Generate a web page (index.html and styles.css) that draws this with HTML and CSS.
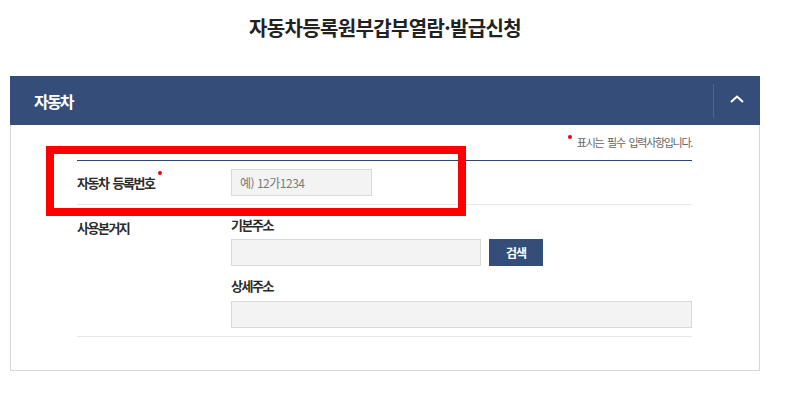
FILE: index.html
```html
<!DOCTYPE html>
<html lang="ko">
<head>
<meta charset="utf-8">
<link rel="stylesheet" href="styles.css">
</head>
<body>
<div class="page">
  <h1 class="title">자동차등록원부갑부열람·발급신청</h1>
  <section class="card">
    <div class="card-head">
      <span class="card-title">자동차</span>
      <span class="head-sep"></span>
      <button class="toggle" aria-label="접기">
        <svg width="14" height="8" viewBox="0 0 14 8"><path d="M1 7 L7 1.5 L13 7" fill="none" stroke="#fff" stroke-width="2"/></svg>
      </button>
    </div>
    <div class="card-body">
      <p class="note"><span class="dot"></span>표시는 필수 입력사항입니다.</p>
      <div class="table">
        <div class="row row-car">
          <div class="label">자동차 등록번호<span class="req"></span></div>
          <div class="field">
            <input class="input input-sm" type="text" placeholder="예) 12가1234">
          </div>
        </div>
        <div class="row row-addr">
          <div class="label label-addr">사용본거지</div>
          <div class="field">
            <div class="sublabel">기본주소</div>
            <div class="inline">
              <input class="input input-md" type="text">
              <button class="btn">검색</button>
            </div>
            <div class="sublabel sublabel-2">상세주소</div>
            <input class="input input-full" type="text">
          </div>
        </div>
      </div>
    </div>
  </section>
  <div class="highlight"></div>
</div>
</body>
</html>
```

FILE: styles.css
```css
* { box-sizing: border-box; }
html, body { margin: 0; padding: 0; background: #fff; }
body {
  font-family: "Noto Sans CJK KR", "Noto Sans", sans-serif;
  color: #333;
}
.page {
  position: relative;
  width: 750px;
  margin-left: 10px;
}
.title {
  margin: 0;
  height: 76px;
  padding-top: 14px;
  text-align: center;
  font-size: 20px;
  line-height: 28px;
  font-weight: 700;
  letter-spacing: -0.65px;
  color: #222;
}
.card-head {
  height: 49px;
  background: #354e79;
  display: flex;
  align-items: center;
  padding-left: 24px;
}
.card-title {
  color: #fff;
  font-size: 16px;
  font-weight: 700;
  letter-spacing: -1.8px;
  flex: 1;
}
.head-sep {
  width: 1px;
  height: 34px;
  background: #4d6590;
}
.toggle {
  width: 46px;
  height: 49px;
  background: transparent;
  border: 0;
  padding: 0 0 4px 0;
  display: flex;
  align-items: center;
  justify-content: center;
}
.card-body {
  border: 1px solid #d6d6d6;
  border-top: 0;
  height: 246px;
  padding: 0 67px 0 66px;
}
.note {
  margin: 0;
  padding-top: 9px;
  height: 35px;
  text-align: right;
  font-size: 11px;
  line-height: 16px;
  letter-spacing: -1.3px;
  word-spacing: 2px;
  color: #666;
}
.note .dot {
  display: inline-block;
  width: 4px;
  height: 4px;
  border-radius: 50%;
  background: #e60012;
  vertical-align: top;
  margin-top: 1px;
  margin-right: 5px;
}
.table {
  border-top: 1px solid #2f4570;
}
.row {
  display: flex;
  border-bottom: 1px solid #e8e8e8;
}
.row-car {
  align-items: center;
  padding: 8px 0 8px;
}
.row-addr {
  padding: 10px 0 8px;
}
.label {
  width: 154px;
  font-size: 13px;
  line-height: 20px;
  font-weight: 700;
  letter-spacing: -1.5px;
  word-spacing: 2px;
  color: #2b2b2b;
}
.label-addr { padding-top: 3px; }
.req {
  display: inline-block;
  width: 4px;
  height: 4px;
  border-radius: 50%;
  background: #e60012;
  vertical-align: top;
  margin-left: 4px;
  margin-top: -2px;
}
.field { flex: 1; }
.sublabel {
  font-size: 13px;
  line-height: 20px;
  font-weight: 700;
  letter-spacing: -1.5px;
  color: #2b2b2b;
  margin-bottom: 4px;
}
.sublabel-2 { margin-top: 10px; margin-bottom: 5px; }
.inline { display: flex; gap: 8px; }
.input {
  display: block;
  height: 27px;
  background: #f3f3f3;
  border: 1px solid #d9d9d9;
  padding: 0 8px;
  font-family: "Noto Sans CJK KR", sans-serif;
  font-size: 12px;
  letter-spacing: -0.5px;
  color: #333;
  outline: none;
}
.input::placeholder { color: #7a7a7a; }
.input-sm { width: 141px; }
.input-md { width: 250px; }
.input-full { width: 100%; }
.btn {
  width: 54px;
  height: 27px;
  border: 0;
  background: #354e79;
  color: #fff;
  font-family: "Noto Sans CJK KR", sans-serif;
  font-size: 12px;
  font-weight: 700;
  letter-spacing: -1px;
  padding: 0;
}
.highlight {
  position: absolute;
  left: 36px;
  top: 146px;
  width: 420px;
  height: 70px;
  border: 8px solid #ff0000;
  pointer-events: none;
}
```
